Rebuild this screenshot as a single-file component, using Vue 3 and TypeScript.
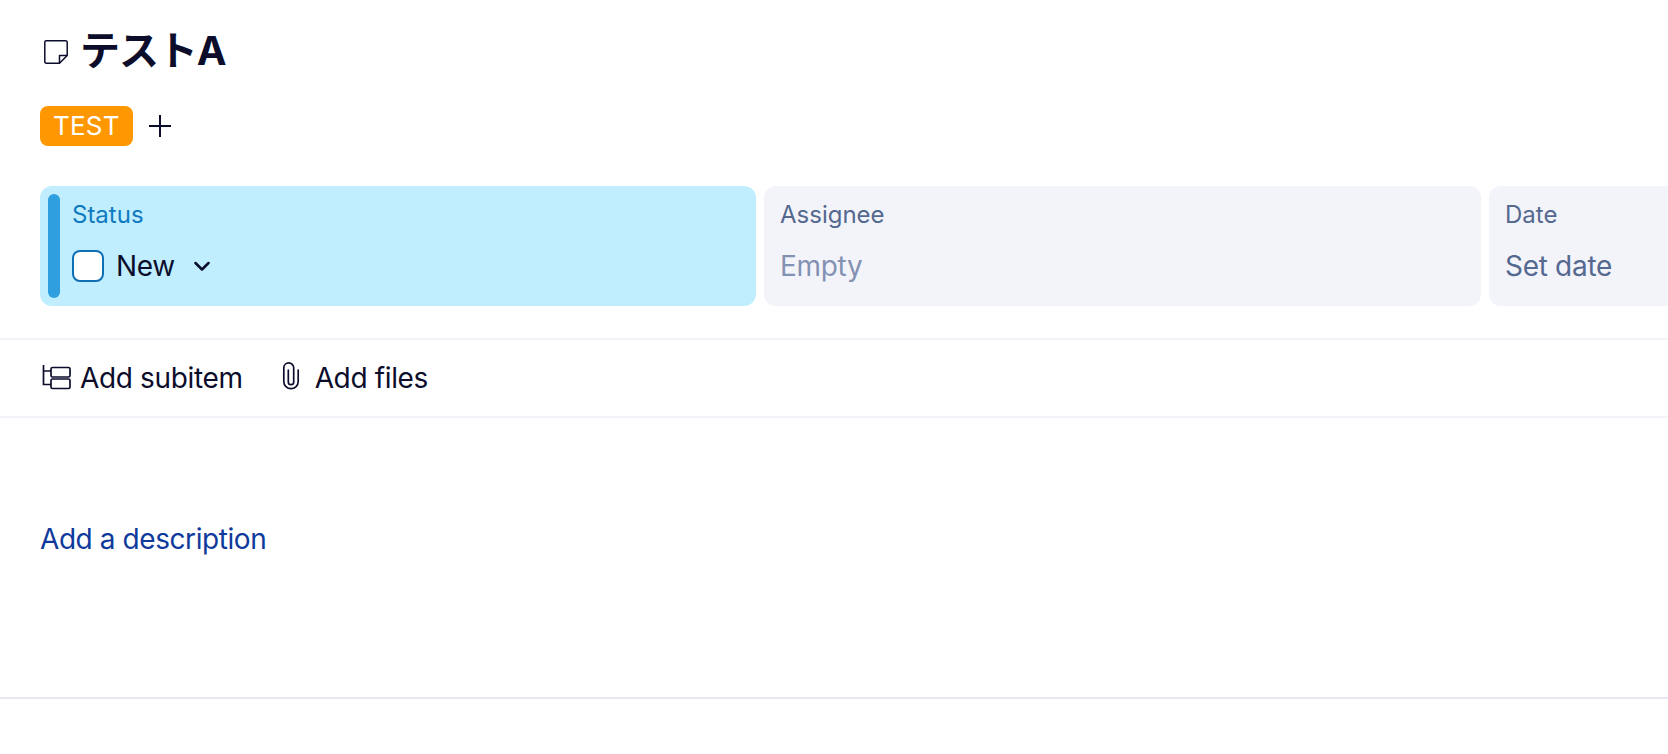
<script setup lang="ts">
interface Field {
  label: string
  value: string
  muted?: boolean
}

const fields: Field[] = [
  { label: 'Assignee', value: 'Empty', muted: true },
  { label: 'Date', value: 'Set date' }
]
</script>

<template>
  <div class="page">
    <div class="header">
      <h1 class="title">
        <svg class="note" width="24" height="24" viewBox="0 0 24 24" fill="none" stroke="#0b0d2b" stroke-width="1.500" stroke-linejoin="round">
          <path d="M2.200 .8h19.600a1.400 1.400 0 0 1 1.400 1.400v13.300l-7.700 7.700H2.200a1.400 1.400 0 0 1-1.400-1.400V2.200A1.400 1.400 0 0 1 2.200 .8z" />
          <path d="M23.200 15.500h-7.700v7.700" />
        </svg>
        <span>テストA</span>
      </h1>
      <div class="tags">
        <span class="tag">TEST</span>
        <svg width="24" height="24" viewBox="0 0 24 24" fill="none" stroke="#0b0d2b" stroke-width="2">
          <path d="M12 1v22M1 12h22" />
        </svg>
      </div>
    </div>

    <div class="fields">
      <div class="field status">
        <div class="bar"></div>
        <div class="fieldBody">
          <div class="label">Status</div>
          <div class="value">
            <span class="check"></span>
            <span class="new">New</span>
            <svg class="chevron" width="16" height="16" viewBox="0 0 16 16" fill="none" stroke="#0b0d2b" stroke-width="2.500" stroke-linecap="round" stroke-linejoin="round">
              <path d="M1.500 4 8 10.500 14.500 4" />
            </svg>
          </div>
        </div>
      </div>
      <div v-for="f in fields" :key="f.label" class="field">
        <div class="fieldBody">
          <div class="label">{{ f.label }}</div>
          <div class="value" :class="{ muted: f.muted }">{{ f.value }}</div>
        </div>
      </div>
    </div>

    <div class="actions">
      <div class="action">
        <svg width="32" height="32" viewBox="0 0 32 32" fill="none" stroke="#0b0d2b" stroke-width="1.700">
          <path d="M3.500 3v19.500H11M3.500 9H11" />
          <rect x="11" y="5.500" width="19" height="9.500" rx="1.500" />
          <rect x="11" y="17" width="19" height="9.500" rx="1.500" />
        </svg>
        <span>Add subitem</span>
      </div>
      <div class="action">
        <svg width="32" height="32" viewBox="0 0 32 32" fill="none" stroke="#0b0d2b" stroke-width="1.700" stroke-linecap="round">
          <path d="M13.300 8v12a2.700 2.700 0 0 0 5.400 0V5.800a4.950 4.950 0 0 0-9.900 0V19.500a7.200 7.200 0 0 0 14.400 0V8" />
        </svg>
        <span>Add files</span>
      </div>
    </div>

    <div class="description">
      <a class="addDesc">Add a description</a>
    </div>
  </div>
</template>

<style>
html, body {
  margin: 0;
  background: #fff;
  overflow: hidden;
}
</style>

<style scoped>
.page {
  width: 1668px;
  height: 754px;
  overflow: hidden;
  font-family: Inter, "Noto Sans CJK JP", sans-serif;
  color: #0b0d2b;
}

.header {
  padding: 22px 40px 0;
}

.title {
  display: flex;
  align-items: center;
  gap: 12px;
  margin: 0;
  height: 56px;
  font-size: 40px;
  font-weight: 700;
  line-height: 56px;
  letter-spacing: -1.1px;
}

.title span {
  margin-top: 1px;
}

.note {
  flex: none;
  margin-top: 4px;
  margin-left: 4px;
}

.tags {
  display: flex;
  align-items: center;
  gap: 15px;
  margin-top: 28px;
}

.tag {
  height: 40px;
  padding: 0 13px;
  border-radius: 8px;
  background: #ff9800;
  color: #fff;
  font-size: 26px;
  line-height: 40px;
  letter-spacing: 0.2px;
}

.fields {
  display: flex;
  gap: 8px;
  margin-top: 40px;
  padding-left: 40px;
}

.field {
  flex: none;
  display: flex;
  width: 717px;
  height: 120px;
  box-sizing: border-box;
  padding: 8px 16px;
  border-radius: 12px;
  background: #f3f4fa;
}

.status {
  width: 716px;
  padding-left: 8px;
  background: #c0eeff;
}

.bar {
  width: 12px;
  border-radius: 6px;
  margin-right: 12px;
  background: #2f9fe0;
}

.label {
  margin-top: 5px;
  font-size: 24px;
  line-height: 32px;
  color: #55688f;
}

.status .label {
  color: #0f7ac0;
}

.value {
  display: flex;
  align-items: center;
  height: 40px;
  margin-top: 15px;
  font-size: 28px;
  line-height: 40px;
  letter-spacing: -0.3px;
  color: #55688f;
}

.value.muted {
  color: #8391b3;
}

.status .value {
  color: #0b0d2b;
}

.check {
  width: 32px;
  height: 32px;
  box-sizing: border-box;
  border: 2px solid #0f6fb5;
  border-radius: 8px;
  background: #fff;
}

.new {
  margin: 0 20px 0 12px;
}

.chevron {
  margin-left: -1px;
  margin-top: 1px;
}

.actions {
  display: flex;
  gap: 32px;
  height: 80px;
  margin-top: 32px;
  padding-left: 40px;
  box-sizing: border-box;
  border-top: 2px solid #f3f4fa;
  border-bottom: 2px solid #f3f4fa;
}

.action {
  display: flex;
  align-items: center;
  gap: 8px;
  font-size: 28px;
  letter-spacing: -0.35px;
}

.description {
  height: 281px;
  box-sizing: border-box;
  padding: 101px 40px 0;
  border-bottom: 2px solid #e6e9f5;
}

.addDesc {
  font-size: 28px;
  line-height: 40px;
  letter-spacing: -0.42px;
  color: #0f3a9c;
}
</style>
